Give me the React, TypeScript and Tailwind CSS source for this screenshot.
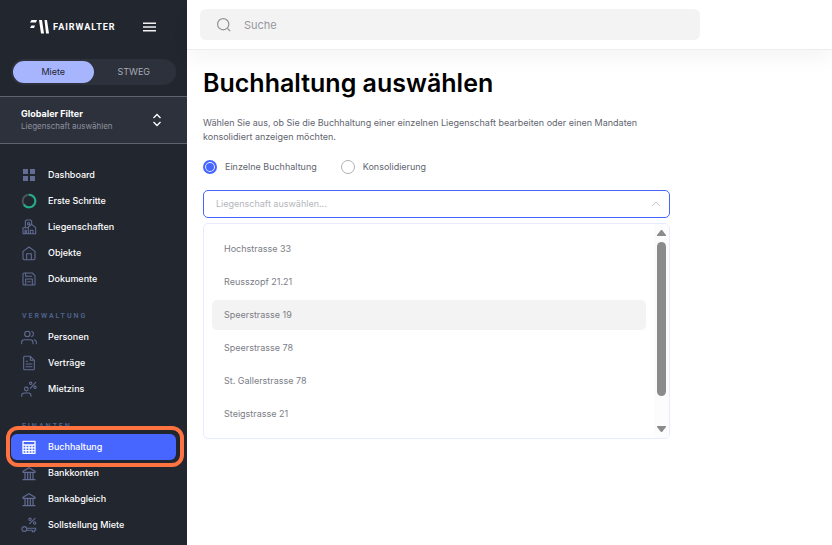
import { useState, type ReactNode } from "react";

function Icon({ children }: { children: ReactNode }) {
  return (
    <svg
      viewBox="0 0 24 24"
      className="size-4 shrink-0"
      fill="none"
      stroke="currentColor"
      strokeWidth="1.6"
      strokeLinecap="round"
      strokeLinejoin="round"
      aria-hidden="true"
    >
      {children}
    </svg>
  );
}

const icons: Record<string, ReactNode> = {
  dashboard: (
    <svg viewBox="0 0 16 16" className="size-4 shrink-0" fill="currentColor" aria-hidden="true">
      <path d="M2 2h5v5H2zM9 2h5v5H9zM2 9h5v5H2zM9 9h5v5H9z" />
    </svg>
  ),
  progress: (
    <svg viewBox="0 0 16 16" className="size-4 shrink-0" fill="none" strokeWidth="2" aria-hidden="true">
      <circle cx="8" cy="8" r="6.3" stroke="#4b5260" />
      <path d="M8 1.7a6.3 6.3 0 1 1-5.2 9.9" stroke="#1fae86" />
    </svg>
  ),
  estates: (
    <Icon>
      <path d="M6.500 12V3l2-1.500h5.500l2 1.500v5M3 22v-9h8v9zM11 12l5-4 6 5v9H11M6 22v-5h2v5M14 22v-5h4v5M10 5.500h3v3h-3z" />
    </Icon>
  ),
  home: (
    <Icon>
      <path d="M3 9.500 12 3l9 6.500V20a2 2 0 0 1-2 2H5a2 2 0 0 1-2-2zM8.500 22v-9h7v9" />
    </Icon>
  ),
  save: (
    <Icon>
      <path d="M3 4.500A1.500 1.500 0 0 1 4.500 3H17l4 4v12.500a1.500 1.500 0 0 1-1.500 1.500h-15A1.500 1.500 0 0 1 3 19.500zM7 21v-9h10v9M7 3v5h9M10 16h4" />
    </Icon>
  ),
  people: (
    <Icon>
      <circle cx="9.500" cy="7.500" r="4" />
      <path d="M1 22v-2a4 4 0 0 1 4-4h9a4 4 0 0 1 4 4v2M16 3.700a4 4 0 0 1 0 7.600M20 16.200a4 4 0 0 1 3 3.800v2" />
    </Icon>
  ),
  contract: (
    <Icon>
      <path d="M14 2H5.500A1.500 1.500 0 0 0 4 3.500v17A1.500 1.500 0 0 0 5.500 22h13a1.500 1.500 0 0 0 1.500-1.500V8zM14 2v6h6M7.500 9.500H10M7.500 13.500h9M7.500 17.500h9" />
    </Icon>
  ),
  rent: (
    <Icon>
      <circle cx="8" cy="12" r="2.800" />
      <path d="M1 23v-1a4 4 0 0 1 4-4h6a4 4 0 0 1 4 4v1M14 11l8-9" />
      <circle cx="14.500" cy="3.500" r="1.800" />
      <circle cx="21" cy="9.500" r="1.800" />
    </Icon>
  ),
  calculator: (
    <Icon>
      <path strokeWidth="2" d="M3 3.500h18V21.500H3zM3 9h18M3 13.200h18M3 17.400h18M7.500 9v12.500M12 9v12.500M16.500 9v12.500" />
    </Icon>
  ),
  bank: (
    <Icon>
      <path strokeWidth="1.800" d="M3 9.500 12 4l9 5.500v1.500H3zM3 22h18M6 11v11M10 12v9M14 12v9M18 11v11" />
    </Icon>
  ),
  debit: (
    <Icon>
      <circle cx="5" cy="18" r="3.600" />
      <path d="M8.500 17H22v3h-2v2h-3v-2H8.500M13 10l8-8" />
      <circle cx="13.500" cy="3.500" r="1.800" />
      <circle cx="20.500" cy="9" r="1.800" />
    </Icon>
  ),
};

const groups = [
  {
    title: "",
    items: [
      ["dashboard", "Dashboard"],
      ["progress", "Erste Schritte"],
      ["estates", "Liegenschaften"],
      ["home", "Objekte"],
      ["save", "Dokumente"],
    ],
  },
  {
    title: "Verwaltung",
    items: [
      ["people", "Personen"],
      ["contract", "Verträge"],
      ["rent", "Mietzins"],
    ],
  },
  {
    title: "Finanzen",
    items: [
      ["calculator", "Buchhaltung"],
      ["bank", "Bankkonten"],
      ["bank", "Bankabgleich"],
      ["debit", "Sollstellung Miete"],
    ],
  },
];

function NavItem({ icon, label, active }: { icon: string; label: string; active: boolean }) {
  return (
    <li className="relative">
      <a
        href="#"
        aria-current={active ? "page" : undefined}
        className={
          active
            ? "flex h-[26px] items-center gap-[11px] rounded-md bg-[#4766ff] pl-[10px] text-white"
            : "flex h-[26px] items-center gap-[11px] pl-[10px] text-[#626c94]"
        }
      >
        {icons[icon]}
        <span className="font-medium text-white">{label}</span>
      </a>
      {active && (
        <span className="pointer-events-none absolute -top-2 -right-2 -bottom-[7px] -left-[5px] z-10 rounded-xl border-4 border-[#ff7340]" />
      )}
    </li>
  );
}

function Sidebar() {
  return (
    <aside className="w-[187px] shrink-0 overflow-hidden bg-[#22262f]">
      <div className="flex h-[59px] items-center pt-px pr-[31px] pb-1.5 pl-[30px]">
        <svg viewBox="0 0 20 16" className="h-4 w-5" fill="#fff" aria-hidden="true">
          <path d="M1.500 1h5.500L6 3.500H0zM1.500 6.500H5L4 9H0z" />
          <path d="M9 1h3l2 13.500h-3zM14.500 1h2.500l2 13.500h-3z" />
        </svg>
        <span className="ml-[3px] font-['Roboto','Liberation_Sans',sans-serif] text-[9px] font-bold tracking-[1px] text-white">
          FAIRWALTER
        </span>
        <button type="button" aria-label="Menü" className="ml-auto">
          <svg viewBox="0 0 13 10" className="h-[10px] w-[13px]" stroke="#f1f1f2" strokeWidth="1.400" aria-hidden="true">
            <path d="M0 1.200h13M0 5h13M0 8.800h13" />
          </svg>
        </button>
      </div>

      <div className="mx-[11px] flex h-[26px] rounded-full bg-[#2d313c] p-[2px]">
        <button type="button" className="flex-1 rounded-full bg-[#a7b5ff] pb-px text-[#22262f]">
          Miete
        </button>
        <button type="button" className="flex-1 rounded-full pb-px text-[#a7abb5]">
          STWEG
        </button>
      </div>

      <button
        type="button"
        className="mt-[11px] flex h-12 w-full items-center justify-between border-y border-[#5f636d] bg-[#2d313c] pr-[25px] pl-[21px] text-left"
      >
        <span>
          <span className="block leading-3 font-bold text-white">Globaler Filter</span>
          <span className="block text-[8px] leading-3 text-[#8d929f]">Liegenschaft auswählen</span>
        </span>
        <svg viewBox="0 0 10 14" className="h-[14px] w-[10px]" fill="none" stroke="#fff" strokeWidth="1.300" aria-hidden="true">
          <path d="m1.500 5 3.500-3.500L8.500 5M1.500 9 5 12.500 8.500 9" />
        </svg>
      </button>

      <nav className="px-[11px] pt-[18px]">
        {groups.map((group) => (
          <section key={group.title}>
            {group.title && (
              <h2 className="h-8 pt-[18px] pl-[11px] font-['Roboto','Liberation_Sans',sans-serif] text-[7px] leading-3 font-semibold tracking-[2px] text-[#4f648f] uppercase">
                {group.title}
              </h2>
            )}
            <ul>
              {group.items.map(([icon, label]) => (
                <NavItem key={label} icon={icon} label={label} active={label === "Buchhaltung"} />
              ))}
            </ul>
          </section>
        ))}
      </nav>
    </aside>
  );
}

const modes = ["Einzelne Buchhaltung", "Konsolidierung"];

const properties = [
  "Hochstrasse 33",
  "Reusszopf 21.21",
  "Speerstrasse 19",
  "Speerstrasse 78",
  "St. Gallerstrasse 78",
  "Steigstrasse 21",
];

function PropertyPicker() {
  const [highlighted, setHighlighted] = useState("Speerstrasse 19");
  return (
    <div className="mt-4">
      <div className="flex h-7 items-center rounded-[5px] border border-[#4766ff] pr-2 pl-3">
        <input
          type="text"
          role="combobox"
          aria-label="Liegenschaft"
          aria-expanded="true"
          aria-controls="properties"
          placeholder="Liegenschaft auswählen..."
          className="min-w-0 flex-1 outline-none placeholder:text-[#b3b6bd]"
        />
        <svg viewBox="0 0 10 6" className="h-[6px] w-[10px]" fill="none" stroke="#c9cad6" aria-hidden="true">
          <path d="m1 5 4-4 4 4" />
        </svg>
      </div>
      <div className="mt-[5px] flex h-[216px] overflow-hidden rounded-[5px] border border-[#e8ebff]">
        <ul id="properties" role="listbox" className="flex flex-1 flex-col gap-[3px] px-2 pt-[10px]">
          {properties.map((name) => (
            <li
              key={name}
              role="option"
              aria-selected={name === highlighted}
              onMouseEnter={() => setHighlighted(name)}
              className={
                name === highlighted
                  ? "flex h-[30px] shrink-0 items-center rounded-[5px] bg-[#f3f3f3] px-3 text-[#7b7e87]"
                  : "flex h-[30px] shrink-0 items-center rounded-[5px] px-3 text-[#7b7e87]"
              }
            >
              {name}
            </li>
          ))}
        </ul>
        <div className="flex w-[15px] flex-col items-center bg-[#fcfcfc] py-[6px]" aria-hidden="true">
          <svg viewBox="0 0 9 6" className="h-[6px] w-[9px]" fill="#8b8b8b">
            <path d="M4 0h1l4 5v1H0V5z" />
          </svg>
          <span className="mt-[6px] h-[154px] w-[9px] rounded-full bg-[#8b8b8b]" />
          <svg viewBox="0 0 9 6" className="mt-auto h-[6px] w-[9px]" fill="#8b8b8b">
            <path d="M0 0h9v1L5 6H4L0 1z" />
          </svg>
        </div>
      </div>
    </div>
  );
}

export default function App() {
  const [mode, setMode] = useState(modes[0]);
  return (
    <div className="flex h-screen overflow-hidden bg-white font-['Inter','Liberation_Sans',sans-serif] text-[9px] leading-[14px]">
      <Sidebar />
      <div className="min-w-0 flex-1">
        <header className="border-b border-[#ededf1] px-[13px] py-[9px] shadow-[0_10px_20px_rgba(0,0,0,0.04)]">
          <label className="flex h-[31px] max-w-[500px] items-center gap-3 rounded-md bg-[#f3f3f3] px-4">
            <svg viewBox="0 0 16 16" className="size-4" fill="none" stroke="#929399" strokeWidth="1.200" aria-hidden="true">
              <circle cx="7.200" cy="7.200" r="5.600" />
              <path d="m11.500 11.500 2.700 2.700" />
            </svg>
            <input
              type="search"
              aria-label="Suche"
              placeholder="Suche"
              className="min-w-0 flex-1 text-[11px] outline-none placeholder:text-[#97989d]"
            />
          </label>
        </header>

        <main className="px-4 pt-[17px]">
          <h1 className="text-[25px] leading-8 font-semibold text-black">Buchhaltung auswählen</h1>
          <p className="mt-[17px] max-w-[467px] text-[#62656f]">
            Wählen Sie aus, ob Sie die Buchhaltung einer einzelnen Liegenschaft bearbeiten oder einen Mandaten
            konsolidiert anzeigen möchten.
          </p>
          <div className="max-w-[467px]">
            <div className="mt-4 flex gap-6">
              {modes.map((name) => (
                <label key={name} className="flex items-center gap-2 text-[#62656f]">
                  <input
                    type="radio"
                    name="mode"
                    checked={mode === name}
                    onChange={() => setMode(name)}
                    className="size-[14px] appearance-none rounded-full border border-[#b0b1b6] checked:border-2 checked:border-[#4766ff] checked:bg-[#4766ff] checked:shadow-[inset_0_0_0_1px_white]"
                  />
                  {name}
                </label>
              ))}
            </div>
            <PropertyPicker />
          </div>
        </main>
      </div>
    </div>
  );
}
